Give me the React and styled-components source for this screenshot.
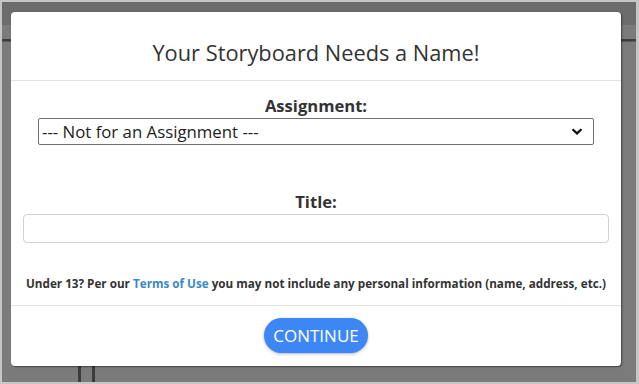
import React from "react";
import styled, { createGlobalStyle } from "styled-components";

const GlobalStyle = createGlobalStyle`
  html, body {
    margin: 0;
    padding: 0;
    width: 639px;
    height: 384px;
    overflow: hidden;
    background: #c6c6c6;
    font-family: "Open Sans", "Liberation Sans", sans-serif;
  }
  * { box-sizing: border-box; }
`;

const Frame = styled.div`
  width: 639px;
  height: 384px;
  padding: 2px 3px 2px 2px;
`;

const Backdrop = styled.div`
  position: relative;
  width: 100%;
  height: 100%;
  background: #7b7b7b;
  display: flex;
  flex-direction: column;
  overflow: hidden;
`;

const PageHeader = styled.div`
  height: 23px;
  background: #6c6c6c;
  flex-shrink: 0;
`;

const PageRule = styled.div`
  margin-top: 14px;
  height: 3px;
  background: #3e3e3e;
  border-bottom: 1px solid #5a5a5a;
  flex-shrink: 0;
`;

const PageColumns = styled.div`
  flex: 1;
  display: flex;
  justify-content: flex-start;
  padding-left: 76px;
  gap: 11px;
`;

const ColumnLine = styled.div`
  width: 3px;
  background: #3c3c3c;
`;

const Modal = styled.div`
  position: absolute;
  left: 9px;
  top: 10px;
  width: 610px;
  height: 354px;
  background: #fff;
  border-radius: 4px;
  box-shadow: 1px 1px 2px rgba(0, 0, 0, 0.45);
  display: flex;
  flex-direction: column;
  color: #333;
`;

const Header = styled.div`
  height: 69px;
  border-bottom: 1px solid #e3e3e3;
  display: flex;
  align-items: center;
  justify-content: center;
  padding-top: 12px;
`;

const Heading = styled.h1`
  margin: 0;
  font-size: 21.8px;
  font-weight: 400;
  color: #333;
`;

const Body = styled.div`
  flex: 1;
  padding: 14px 12px 0;
  display: flex;
  flex-direction: column;
`;

const Label = styled.label`
  display: block;
  text-align: center;
  font-size: 16.6px;
  font-weight: 700;
  line-height: 22px;
  color: #333;
  margin-top: ${(p) => p.$top || 0}px;
`;

const SelectWrap = styled.div`
  position: relative;
  margin: 1px 15px 0;
`;

const Select = styled.select`
  appearance: none;
  width: 100%;
  height: 27px;
  border: 1px solid #6f6f6f;
  border-radius: 2px;
  background: #fff;
  padding: 0 3px;
  font-family: inherit;
  font-size: 16.8px;
  color: #222;
  outline: none;
`;

const Chevron = styled.svg`
  position: absolute;
  right: 11px;
  top: 10px;
  pointer-events: none;
`;

const TextInput = styled.input`
  width: 100%;
  height: 29px;
  margin-top: 1px;
  border: 1px solid #ccd2d8;
  border-radius: 4px;
  background: #fff;
  font-family: inherit;
  font-size: 14px;
  outline: none;
`;

const Notice = styled.p`
  margin: 32px 0 0;
  font-size: 11.7px;
  font-weight: 700;
  line-height: 16px;
  color: #333;
  text-align: center;
  white-space: nowrap;
`;

const Link = styled.a`
  color: #3a87c8;
  text-decoration: none;
`;

const Footer = styled.div`
  height: 61px;
  border-top: 1px solid #e3e3e3;
  display: flex;
  align-items: flex-start;
  justify-content: center;
  padding-top: 12px;
`;

const Button = styled.button`
  height: 35px;
  padding: 0 9px;
  border: none;
  border-radius: 18px;
  background: #3c87f5;
  color: #fff;
  font-family: inherit;
  font-size: 17px;
  font-weight: 400;
  box-shadow: 0 1px 3px rgba(0, 0, 0, 0.3);
  cursor: pointer;
`;

export default function App() {
  return (
    <>
      <GlobalStyle />
      <Frame>
        <Backdrop>
          <PageHeader />
          <PageRule />
          <PageColumns>
            <ColumnLine />
            <ColumnLine />
          </PageColumns>
          <Modal>
            <Header>
              <Heading>Your Storyboard Needs a Name!</Heading>
            </Header>
            <Body>
              <Label>Assignment:</Label>
              <SelectWrap>
                <Select defaultValue="none">
                  <option value="none">--- Not for an Assignment ---</option>
                </Select>
                <Chevron width="12" height="7" viewBox="0 0 12 7">
                  <path
                    d="M1.5 1.2 L6 5.4 L10.5 1.2"
                    fill="none"
                    stroke="#111"
                    strokeWidth="2.2"
                  />
                </Chevron>
              </SelectWrap>
              <Label $top={46}>Title:</Label>
              <TextInput type="text" />
              <Notice>
                Under 13? Per our <Link href="#">Terms of Use</Link> you may
                not include any personal information (name, address, etc.)
              </Notice>
            </Body>
            <Footer>
              <Button>CONTINUE</Button>
            </Footer>
          </Modal>
        </Backdrop>
      </Frame>
    </>
  );
}
